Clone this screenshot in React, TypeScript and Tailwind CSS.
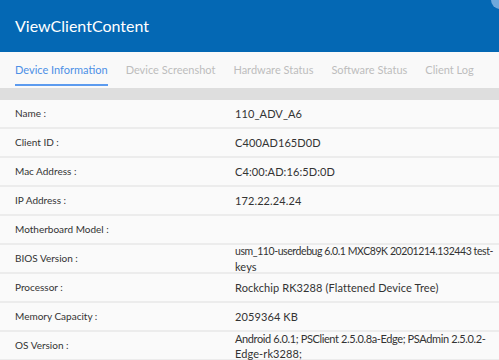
import React from 'react';

const tabs = ['Device Information', 'Device Screenshot', 'Hardware Status', 'Software Status', 'Client Log'];

const rows: [string, [string, string][]][] = [
  ['Name :', [['110_ADV_A6', '']]],
  ['Client ID :', [['C400AD165D0D', '']]],
  ['Mac Address :', [['C4:00:AD:16:5D:0D', '']]],
  ['IP Address :', [['172.22.24.24', '']]],
  ['Motherboard Model :', []],
  [
    'BIOS Version :',
    [
      ['usm_110-userdebug 6.0.1 MXC89K 20201214.132443 test-', 'text-[10.5px] tracking-[-0.42px]'],
      ['keys', ''],
    ],
  ],
  ['Processor :', [['Rockchip RK3288 (Flattened Device Tree)', '']]],
  ['Memory Capacity :', [['2059364 KB', '']]],
  [
    'OS Version :',
    [
      ['Android 6.0.1; PSClient 2.5.0.8a-Edge; PSAdmin 2.5.0.2-', 'tracking-[-0.38px]'],
      ['Edge-rk3288;', ''],
    ],
  ],
];

export default function App() {
  return (
    <div className="w-[499px] h-[360px] overflow-hidden bg-[#fafafa] font-['Lato','Liberation_Sans',sans-serif]">
      {/* header */}
      <div className="relative h-[52px] bg-[#0468b4] flex items-center px-[15px]">
        <h1 className="text-white text-[16px] font-['Lato',sans-serif]">ViewClientContent</h1>
        <div className="absolute right-[-10px] top-[-9px] w-[18px] h-[18px] rounded-full bg-[#6ea8dc]" />
      </div>

      {/* tabs */}
      <div className="h-[36px] bg-[#f9f9f9] flex px-[15px] gap-[18px] text-[11px] whitespace-nowrap">
        {tabs.map((t, i) => (
          <div
            key={t}
            className={`h-full flex items-center relative ${i === 0 ? 'text-[#4d90e6]' : 'text-[#bdbdbd]'}`}
          >
            {t}
            {i === 0 && <div className="absolute left-0 right-0 bottom-[2px] h-[2px] bg-[#5c9bef]" />}
          </div>
        ))}
      </div>

      <div className="h-[12px] bg-[#dedede]" />

      {/* rows */}
      <div>
        {rows.map(([k, v]) => (
          <div key={k} className="h-[29px] flex items-center border-b-2 border-[#ececec] text-[#333]">
            <div className="w-[235px] pl-[15px] shrink-0 text-[10px]">{k}</div>
            <div className="w-[249px] shrink-0 text-[11px] leading-[15px]">
              {v.map(([line, cls]) => (
                <div key={line} className={`whitespace-nowrap ${cls || 'tracking-[0.1px]'}`}>
                  {line}
                </div>
              ))}
            </div>
          </div>
        ))}
      </div>
    </div>
  );
}
